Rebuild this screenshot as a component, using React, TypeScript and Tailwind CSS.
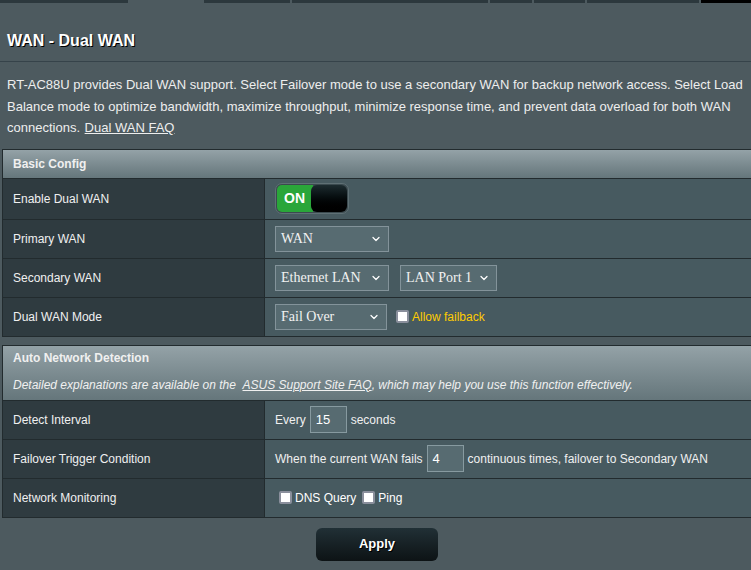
import { ChevronDown } from "lucide-react";

const tabs = [
  { w: 128, c: "bg-[#2c383d]" },
  { w: 72, c: "bg-[#4d5a5f]" },
  { w: 86, c: "bg-[#2c383d]" },
  { w: 196, c: "bg-[#2c383d]" },
  { w: 42, c: "bg-[#2c383d]" },
  { w: 51, c: "bg-[#2c383d]" },
  { w: 112, c: "bg-[#2c383d]" },
  { w: 64, c: "bg-black" },
];

function Select({ label, w }: { label: string; w: string }) {
  return (
    <div
      className={`flex items-center justify-between h-[26px] ${w} bg-[#576b71] border border-[#83939a] pl-[5px] pr-[6px] text-[14px] text-[#f2f2f2] [font-family:'Liberation_Serif',serif]`}
    >
      <span>{label}</span>
      <ChevronDown size={12} strokeWidth={2.5} className="text-white" />
    </div>
  );
}

function Check({ label, color = "text-white" }: { label: string; color?: string }) {
  return (
    <label className={`flex items-center gap-[3px] ${color}`}>
      <span className="w-[13px] h-[13px] bg-white border-2 border-[#8a8f9c] rounded-[2px]" />
      {label}
    </label>
  );
}

function NumInput({ value }: { value: string }) {
  return (
    <span className="inline-flex items-center h-[27px] w-[37px] bg-[#576b71] border border-[#879aa0] pl-[5px] text-[13px] text-white mx-[4px]">
      {value}
    </span>
  );
}

function Row({ label, children, h = "h-[39px]" }: { label: string; children: React.ReactNode; h?: string }) {
  return (
    <div className={`flex ${h} border-t border-[#222b2e]`}>
      <div className="w-[262px] shrink-0 bg-[#2f3b40] flex items-center pl-[10px] border-r border-[#222b2e]">
        {label}
      </div>
      <div className="flex-1 bg-[#475a60] flex items-center pl-[10px] gap-[11px]">{children}</div>
    </div>
  );
}

export default function App() {
  return (
    <div className="w-[751px] h-[570px] overflow-hidden bg-[#4d5a5f] text-white [font-family:'Liberation_Sans',Arial,sans-serif]">
      <div className="flex h-[3px] gap-[2px]">
        {tabs.map((t, i) => (
          <div key={i} className={`${t.c} shrink-0`} style={{ width: t.w }} />
        ))}
      </div>

      <div className="px-[7px]">
        <h1 className="pt-[26px] pb-[8px] text-[16px] leading-[24px] font-bold [text-shadow:1px_1px_0_#000]">
          WAN - Dual WAN
        </h1>
        <div className="h-px bg-[#36434a] -mx-[7px]" />
        <p className="pt-[12px] text-[13px] leading-[21.5px] text-[#eeeeee]">
          RT-AC88U provides Dual WAN support. Select Failover mode to use a secondary WAN for backup network access. Select
          Load Balance mode to optimize bandwidth, maximize throughput, minimize response time, and prevent data overload
          for both WAN connections. <span className="underline ml-[1px]">Dual WAN FAQ</span>
        </p>
      </div>

      <div className="ml-[2px] mt-[10px] w-[760px] border border-[#222b2e] text-[12px] text-[#f0f0f0]">
        <div className="h-[28px] flex items-center pl-[10px] font-bold bg-linear-to-b from-[#94a2a7] to-[#65767b]">
          Basic Config
        </div>
        <Row label="Enable Dual WAN" h="h-[41px]">
          <div className="flex h-[31px] w-[74px] rounded-[7px] border border-[#5f7075] bg-[#3b4a4f] p-px">
            <div className="flex-1 bg-[#2aa63a] rounded-l-[5px] flex items-center pl-[7px] text-[14px] font-bold text-white">
              ON
            </div>
            <div className="w-[36px] -ml-[2px] rounded-[6px] bg-linear-to-b from-[#1d2c30] to-[#000000]" />
          </div>
        </Row>
        <Row label="Primary WAN">
          <Select label="WAN" w="w-[114px]" />
        </Row>
        <Row label="Secondary WAN">
          <Select label="Ethernet LAN" w="w-[114px]" />
          <Select label="LAN Port 1" w="w-[97px]" />
        </Row>
        <Row label="Dual WAN Mode">
          <Select label="Fail Over" w="w-[112px]" />
          <div className="-ml-[2px]">
            <Check label="Allow failback" color="text-[#ffcc00]" />
          </div>
        </Row>
      </div>

      <div className="ml-[2px] mt-[8px] w-[760px] border border-[#222b2e] text-[12px] text-[#f0f0f0]">
        <div className="h-[54px] pl-[10px] bg-linear-to-b from-[#94a2a7] to-[#65767b] flex flex-col">
          <div className="h-[24px] flex items-center font-bold">Auto Network Detection</div>
          <div className="h-[30px] flex items-center italic">
            Detailed explanations are available on the&nbsp;&nbsp;
            <span className="underline">ASUS Support Site FAQ</span>, which may help you use this function effectively.
          </div>
        </div>
        <Row label="Detect Interval">
          <span>
            Every
            <NumInput value="15" />
            seconds
          </span>
        </Row>
        <Row label="Failover Trigger Condition">
          <span>
            When the current WAN fails
            <NumInput value="4" />
            continuous times, failover to Secondary WAN
          </span>
        </Row>
        <Row label="Network Monitoring">
          <div className="flex gap-[6px] pl-[4px]">
            <Check label="DNS Query" />
            <Check label="Ping" />
          </div>
        </Row>
      </div>

      <div className="flex justify-center mt-[10px] pl-[3px]">
        <button className="w-[122px] h-[33px] rounded-[6px] bg-linear-to-b from-[#213036] to-[#0d1315] text-[13px] font-bold text-white [text-shadow:1px_1px_0_#000]">
          Apply
        </button>
      </div>
    </div>
  );
}
